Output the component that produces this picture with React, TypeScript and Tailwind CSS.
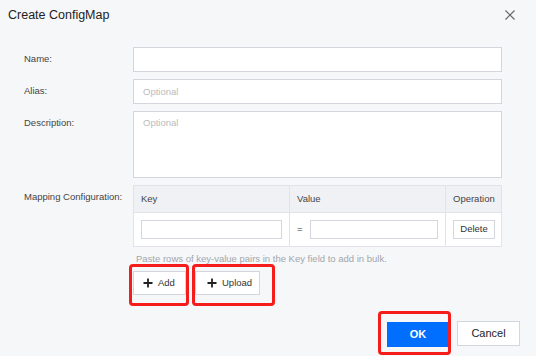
import React from "react";

const inputCls =
  "block w-full border border-[#d3d6dc] bg-white px-[9px] text-[9.5px] text-[#333] outline-none placeholder:text-[#bbb]";

function Plus() {
  return (
    <svg width="10" height="10" viewBox="0 0 10 10" className="shrink-0">
      <path d="M5 0.5v9M0.5 5h9" stroke="#222" strokeWidth="1.8" />
    </svg>
  );
}

function Mark({ className }: { className: string }) {
  // red annotation frame drawn over a button
  return (
    <span
      className={`pointer-events-none absolute rounded-[4px] border-[3px] border-[#f51c1c] ${className}`}
    />
  );
}

export default function App() {
  return (
    <div className="relative h-[356px] w-[536px] overflow-hidden bg-[#f6f7f9] font-['Liberation_Sans',Arial,sans-serif] text-[#444]">
      {/* header */}
      <div className="flex h-[30px] items-center justify-between pl-[8px] pr-[21px]">
        <h1 className="text-[12.5px] text-[#222]">Create ConfigMap</h1>
        <svg width="10" height="10" viewBox="0 0 10 10">
          <path d="M0.5 0.5l9 9M9.5 0.5l-9 9" stroke="#666" strokeWidth="1.2" />
        </svg>
      </div>

      {/* form */}
      <div className="grid grid-cols-[109px_369px] gap-y-[7px] pl-[24px] pt-[17px]">
        <div className="flex items-center text-[9.5px]">Name:</div>
        <input className={`${inputCls} h-[25px]`} />

        <div className="flex items-center text-[9.5px]">Alias:</div>
        <input className={`${inputCls} h-[25px]`} placeholder="Optional" />

        <div className="pt-[6px] text-[9.5px] leading-[12px]">Description:</div>
        <textarea className={`${inputCls} h-[67px] resize-none pt-[4px]`} placeholder="Optional" />

        <div className="pt-[6px] text-[9.5px] leading-[12px]">Mapping Configuration:</div>
        <div>
          <div className="border border-[#e1e3e8] bg-white text-[9.5px]">
            <div className="grid h-[27px] grid-cols-[156px_156px_1fr] border-b border-[#e1e3e8] bg-[#f0f1f4]">
              <div className="flex items-center border-r border-[#e1e3e8] pl-[7px]">Key</div>
              <div className="flex items-center border-r border-[#e1e3e8] pl-[7px]">Value</div>
              <div className="flex items-center pl-[7px]">Operation</div>
            </div>
            <div className="grid h-[33px] grid-cols-[156px_156px_1fr]">
              <div className="flex items-center border-r border-[#e1e3e8] px-[7px]">
                <input className={`${inputCls} h-[19px]`} />
              </div>
              <div className="flex items-center gap-[7px] border-r border-[#e1e3e8] pl-[7px] pr-[7px]">
                <span className="text-[#333]">=</span>
                <input className={`${inputCls} h-[19px]`} />
              </div>
              <div className="flex items-center pl-[7px]">
                <button className="h-[19px] w-[42px] border border-[#d3d6dc] bg-white text-[9.5px] text-[#333]">
                  Delete
                </button>
              </div>
            </div>
          </div>

          <p className="mt-[6px] pl-[3px] text-[9.5px] leading-[12px] text-[#a3a6ab]">
            Paste rows of key-value pairs in the Key field to add in bulk.
          </p>

          <div className="mt-[6px] flex gap-[9px]">
            <div className="relative">
              <button className="flex h-[24px] w-[53px] items-center gap-[5px] border border-[#d3d6dc] bg-white pl-[9px] text-[9.5px] text-[#333]">
                <Plus />
                Add
              </button>
              <Mark className="-bottom-[11px] -left-[4px] -right-[3px] -top-[7px]" />
            </div>
            <div className="relative">
              <button className="flex h-[24px] w-[65px] items-center gap-[5px] border border-[#d3d6dc] bg-white pl-[11px] text-[9.5px] text-[#333]">
                <Plus />
                Upload
              </button>
              <Mark className="-bottom-[11px] -left-[3px] -right-[15px] -top-[7px]" />
            </div>
          </div>
        </div>
      </div>

      {/* footer */}
      <div className="mt-[26px] flex justify-end gap-[8px] pr-[16px]">
        <div className="relative">
          <button className="h-[25px] w-[62px] bg-[#006eff] text-[11px] font-bold text-white">OK</button>
          <Mark className="-bottom-[8px] -left-[9px] -right-[2px] -top-[10px]" />
        </div>
        <button className="h-[25px] w-[63px] border border-[#d3d6dc] bg-white text-[11px] text-[#222]">
          Cancel
        </button>
      </div>
    </div>
  );
}
